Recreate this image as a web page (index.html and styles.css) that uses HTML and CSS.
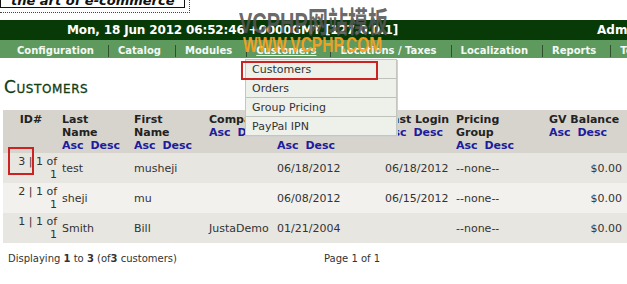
FILE: index.html
```html
<!DOCTYPE html>
<html lang="en">
<head>
<meta charset="UTF-8">
<title>Customers</title>
<link rel="stylesheet" href="styles.css">
</head>
<body>
<div class="brand">
  <div class="logo">the art of e-commerce</div>
</div>

<div class="topbar">
  <span class="clock">Mon, 18 Jun 2012 06:52:46 +0000GMT [127.0.0.1]</span>
  <span class="admin">Administrator</span>
</div>

<div class="menu">
  <a href="#">Configuration</a><span class="sep"></span>
  <a href="#">Catalog</a><span class="sep"></span>
  <a href="#">Modules</a><span class="sep"></span>
  <a href="#" class="current">Customers</a><span class="sep"></span>
  <a href="#">Locations / Taxes</a><span class="sep"></span>
  <a href="#">Localization</a><span class="sep"></span>
  <a href="#">Reports</a><span class="sep"></span>
  <a href="#">Tools</a>
</div>

<ul class="dropdown">
  <li>Customers</li>
  <li>Orders</li>
  <li>Group Pricing</li>
  <li>PayPal IPN</li>
</ul>

<h1 class="page-title">Customers</h1>

<table class="listing">
  <colgroup>
    <col style="width:56px"><col style="width:72px"><col style="width:75px"><col style="width:68px">
    <col style="width:108px"><col style="width:71px"><col style="width:93px"><col style="width:81px">
  </colgroup>
  <thead>
    <tr>
      <th class="id">ID#</th>
      <th>Last<br>Name<br><a href="#">Asc</a> <a href="#">Desc</a></th>
      <th>First<br>Name<br><a href="#">Asc</a> <a href="#">Desc</a></th>
      <th>Company<br><a href="#">Asc</a> <a href="#">Desc</a></th>
      <th>Account<br>Created<br><a href="#">Asc</a> <a href="#">Desc</a></th>
      <th>Last Login<br><a href="#">Asc</a> <a href="#">Desc</a></th>
      <th>Pricing<br>Group<br><a href="#">Asc</a> <a href="#">Desc</a></th>
      <th>GV Balance<br><a href="#">Asc</a> <a href="#">Desc</a></th>
    </tr>
  </thead>
  <tbody>
    <tr>
      <td class="id">3 | 1 of<br>1</td>
      <td>test</td>
      <td>musheji</td>
      <td></td>
      <td>06/18/2012</td>
      <td>06/18/2012</td>
      <td>--none--</td>
      <td class="money">$0.00</td>
    </tr>
    <tr>
      <td class="id">2 | 1 of<br>1</td>
      <td>sheji</td>
      <td>mu</td>
      <td></td>
      <td>06/08/2012</td>
      <td>06/15/2012</td>
      <td>--none--</td>
      <td class="money">$0.00</td>
    </tr>
    <tr>
      <td class="id">1 | 1 of<br>1</td>
      <td>Smith</td>
      <td>Bill</td>
      <td>JustaDemo</td>
      <td>01/21/2004</td>
      <td></td>
      <td>--none--</td>
      <td class="money">$0.00</td>
    </tr>
  </tbody>
</table>

<div class="pager">
  <span>Displaying <b>1</b> to <b>3</b> (of<b>3</b> customers)</span>
  <span>Page 1 of 1</span>
</div>

<!-- screenshot annotations -->
<div class="mark mark-menu"></div>
<div class="mark mark-id"></div>
<div class="watermark wm-name">VCPHP网站模板</div>
<div class="watermark wm-url">WWW.VCPHP.COM</div>
</body>
</html>
```

FILE: styles.css
```css
html{
  overflow: hidden;
}
body{
  margin: 0;
  font-family: "DejaVu Sans", Verdana, sans-serif;
  font-size: 11px;
  color: #333;
  background: #fff;
}

/* header */
.brand{
  display: flow-root;
  width: 189px;
  height: 12px;
  border-right: 1px dotted #444;
  border-bottom: 1px dotted #444;
  margin-bottom: 7px;
}
.logo{
  margin-top: -6px;
  width: 173px;
  padding-left: 10px;
  border: 1px solid #111;
  font-size: 13px;
  line-height: 12px;
  font-weight: bold;
  font-style: italic;
  color: #111;
  white-space: nowrap;
}
.topbar{
  display: grid;
  grid-template-columns: 597px auto;
  height: 20px;
  background: #073a07;
  color: #fff;
  font-weight: bold;
  font-size: 12px;
  line-height: 20px;
  white-space: nowrap;
}
.clock{
  padding-left: 67px;
  letter-spacing: -0.15px;
}
.menu{
  display: flex;
  align-items: center;
  height: 15px;
  padding: 3px 0 0 17px;
  background: #5e9a5e;
  font-size: 10px;
  font-weight: bold;
  line-height: 15px;
  white-space: nowrap;
}
.menu a{
  color: #f4f8f4;
  text-decoration: none;
  flex-shrink: 0;
}
.menu a.current{
  text-decoration: underline;
}
.menu .sep{
  flex-shrink: 0;
  width: 1px;
  height: 12px;
  margin: 0 9px 0 14px;
  background: #2f4f2f;
}

/* customers menu */
.dropdown{
  position: absolute;
  left: 245px;
  top: 59px;
  width: 150px;
  margin: 0;
  padding: 0;
  list-style: none;
  background: #eef0ea;
  border: 1px solid #c4c6c0;
  box-shadow: 1px 1px 0 #d0d0d0;
}
.dropdown li{
  height: 17px;
  padding: 1px 0 0 6px;
  line-height: 18px;
  border-bottom: 1px solid #bfc1bb;
  color: #333;
}
.dropdown li:last-child{
  border-bottom: 0;
}

.page-title{
  margin: 19px 0 13px 4px;
  font-size: 17px;
  line-height: 20px;
  font-weight: normal;
  font-variant: small-caps;
  letter-spacing: 0.6px;
  color: #123d12;
  -webkit-text-stroke: 0.3px #123d12;
}

/* listing */
.listing{
  table-layout: fixed;
  width: 624px;
  margin-left: 3px;
  border-collapse: collapse;
}
.listing th{
  padding: 3px 3px 1px;
  text-align: left;
  vertical-align: top;
  line-height: 13px;
  height: 39px;
  color: #222;
  background: #d7d4ce;
  white-space: nowrap;
}
.listing th.id{
  text-align: center;
}
.listing th a{
  color: #1c1c9c;
  text-decoration: none;
}
.listing th a + a{
  margin-left: 3px;
}
.listing td{
  padding: 2px 3px;
  line-height: 13px;
  height: 26px;
  vertical-align: middle;
  white-space: nowrap;
}
.listing tbody tr:nth-child(odd){
  background: #e8e6e1;
}
.listing tbody tr:nth-child(even){
  background: #f2f1ee;
}
.listing td.id{
  text-align: right;
  padding-right: 2px;
}
.listing td.money{
  text-align: right;
  padding-right: 5px;
}

.pager{
  display: grid;
  grid-template-columns: 316px auto;
  margin-top: 9px;
  padding-left: 8px;
  font-size: 10px;
  line-height: 13px;
}

/* annotations drawn over the screenshot */
.mark{
  position: absolute;
  border: 2px solid #cc2222;
}
.mark-menu{
  left: 241px;
  top: 61px;
  width: 133px;
  height: 15px;
}
.mark-id{
  left: 8px;
  top: 147px;
  width: 22px;
  height: 24px;
}
.watermark{
  position: absolute;
  font-family: "Liberation Sans", "Noto Sans CJK SC", sans-serif;
  font-weight: bold;
  white-space: nowrap;
  transform-origin: 0 0;
  transform: scaleY(1.45);
}
.wm-name{
  left: 239px;
  top: 8px;
  font-size: 20px;
  line-height: 20px;
  color: rgba(85, 85, 85, 0.9);
}
.wm-url{
  left: 243px;
  top: 33px;
  font-size: 15.5px;
  line-height: 16px;
  color: rgba(247, 162, 30, 0.95);
}
```
